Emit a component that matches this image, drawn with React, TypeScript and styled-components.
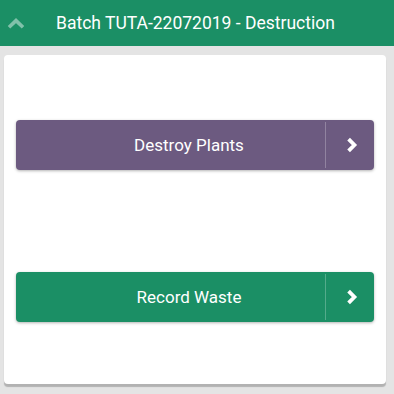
import React from "react";
import styled, { createGlobalStyle } from "styled-components";

const GlobalStyle = createGlobalStyle`
  body {
    margin: 0;
    background: #e4e4e4;
    font-family: Roboto, "Liberation Sans", sans-serif;
  }
`;

const Page = styled.div`
  width: 394px;
  height: 394px;
  display: flex;
  flex-direction: column;
`;

const Header = styled.div`
  height: 46px;
  background: #1b8f65;
  color: #ffffff;
  display: flex;
  align-items: center;
  padding-left: 7px;
  font-size: 17.5px;
  box-sizing: border-box;
`;

const Toggle = styled.svg`
  width: 18px;
  height: 11px;
  margin-right: 31px;
  margin-top: 1px;
`;

const Card = styled.div`
  margin: 9px 8px 0 4px;
  height: 329px;
  box-sizing: border-box;
  background: #ffffff;
  border-radius: 4px;
  box-shadow: 0 3px 1px rgba(0, 0, 0, 0.22);
  padding: 65px 12px 0;
  display: flex;
  flex-direction: column;
  gap: 102px;
`;

const ActionButton = styled.div<{ $color: string }>`
  height: 50px;
  display: flex;
  background: ${(p) => p.$color};
  border-radius: 4px;
  color: #ffffff;
  box-shadow: 0 1px 3px rgba(0, 0, 0, 0.3);
  cursor: pointer;
`;

const Label = styled.div`
  flex: 1;
  display: flex;
  align-items: center;
  justify-content: center;
  padding-left: 37px;
  font-size: 17px;
  border-right: 1px solid rgba(255, 255, 255, 0.25);
  margin: 2px 0;
`;

const Arrow = styled.div`
  width: 48px;
  box-sizing: border-box;
  display: flex;
  align-items: center;
  justify-content: center;
  padding-left: 3px;
`;

const ChevronRight = () => (
  <svg width="12" height="16" viewBox="0 0 12 16">
    <path d="M2.6 2.2 L8.4 8 L2.6 13.8" fill="none" stroke="#fff" strokeWidth="3.8" />
  </svg>
);

const actions = [
  { label: "Destroy Plants", color: "#6c5a80" },
  { label: "Record Waste", color: "#1b8f65" },
];

export default function App() {
  return (
    <Page>
      <GlobalStyle />
      <Header>
        <Toggle viewBox="0 0 18 11">
          <path d="M2 9.3 L9 2.6 L16 9.3" fill="none" stroke="rgba(255,255,255,0.45)" strokeWidth="3.6" />
        </Toggle>
        Batch TUTA-22072019 - Destruction
      </Header>
      <Card>
        {actions.map((a) => (
          <ActionButton key={a.label} $color={a.color}>
            <Label>{a.label}</Label>
            <Arrow>
              <ChevronRight />
            </Arrow>
          </ActionButton>
        ))}
      </Card>
    </Page>
  );
}
